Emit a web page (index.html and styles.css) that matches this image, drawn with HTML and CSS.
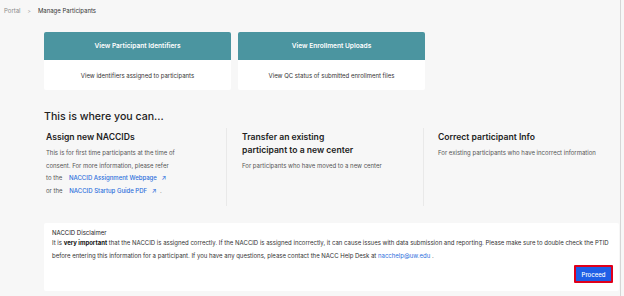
FILE: index.html
```html
<!DOCTYPE html>
<html>
<head>
<meta charset="utf-8">
<link rel="stylesheet" href="styles.css">
</head>
<body>
<div class="page">
  <nav class="crumbs"><span class="crumb-muted">Portal</span><span class="sep">&gt;</span><span class="crumb-current">Manage Participants</span></nav>
  <div class="main">
    <div class="cards">
      <div class="card">
        <div class="card-head">View Participant Identifiers</div>
        <div class="card-body">View identifiers assigned to participants</div>
      </div>
      <div class="card">
        <div class="card-head">View Enrollment Uploads</div>
        <div class="card-body">View QC status of submitted enrollment files</div>
      </div>
    </div>
    <h1 class="title">This is where you can...</h1>
    <div class="cols">
      <div class="col col-1">
        <h2>Assign new NACCIDs</h2>
        <p>This is for first time participants at the time of consent. For more information, please refer</p>
        <p class="linkline">to the <a href="#">NACCID Assignment Webpage <span class="arr">&#8599;</span></a></p>
        <p class="linkline">or the <a href="#">NACCID Startup Guide PDF <span class="arr">&#8599;</span></a> .</p>
      </div>
      <div class="col col-2">
        <h2>Transfer an existing<br>participant to a new center</h2>
        <p>For participants who have moved to a new center</p>
      </div>
      <div class="col col-3">
        <h2>Correct participant Info</h2>
        <p>For existing participants who have incorrect information</p>
      </div>
    </div>
    <div class="disclaimer">
      <div class="d-title">NACCID Disclaimer</div>
      <p>It is <b>very important</b> that the NACCID is assigned correctly. If the NACCID is assigned incorrectly, it can cause issues with data submission and reporting. Please make sure to double check the PTID before entering this information for a participant. If you have any questions, please contact the NACC Help Desk at <a href="#">nacchelp@uw.edu</a> .</p>
      <div class="actions"><button class="proceed">Proceed</button></div>
    </div>
  </div>
</div>
</body>
</html>
```
FILE: styles.css
```css
html, body {
  margin: 0;
  padding: 0;
  background: #f7f7f7;
  font-family: Inter, "Liberation Sans", sans-serif;
  color: #2b2b2b;
}
.page {
  width: 621px;
  height: 296px;
  border-right: 1px solid #d6d6d6;
  box-sizing: border-box;
  overflow: hidden;
}
.crumbs {
  display: flex;
  align-items: center;
  gap: 7px;
  padding: 6px 0 0 4px;
  height: 10px;
  font-size: 6px;
  line-height: 8px;
}
.crumb-muted { color: #8a8a8a; }
.sep { color: #9a9a9a; font-size: 5px; }
.crumb-current { color: #333; }
.main {
  padding: 16px 0 0 44px;
}
.cards {
  display: flex;
  gap: 7px;
}
.card {
  width: 187px;
  background: #fff;
  border-radius: 2px;
  overflow: hidden;
}
.card-head {
  background: #4b95a0;
  color: #fff;
  font-weight: 600;
  font-size: 6.6px;
  height: 28px;
  display: flex;
  align-items: center;
  justify-content: center;
}
.card-body {
  height: 30px;
  display: flex;
  align-items: center;
  justify-content: center;
  font-size: 6px;
  color: #333;
  padding-top: 1px;
  box-sizing: border-box;
}
.title {
  margin: 20px 0 0 0;
  font-size: 10.6px;
  font-weight: 500;
  line-height: 14px;
  color: #222;
}
.cols {
  display: flex;
  margin-top: 4px;
}
.col {
  width: 195px;
  box-sizing: border-box;
  height: 78px;
}
.col-1 { padding: 3px 0 0 2px; border-right: 1px solid #e9e9e9; width: 183px; }
.col-2 { padding: 3px 0 0 15px; border-right: 1px solid #e9e9e9; width: 197px; }
.col-3 { padding: 3px 0 0 14px; }
.col h2 {
  margin: 0;
  font-size: 8.6px;
  font-weight: 600;
  line-height: 13px;
  color: #222;
}
.col p {
  margin: 3px 0 0 0;
  font-size: 6px;
  line-height: 12.5px;
  color: #555;
  width: 140px;
}
.col-2 p, .col-3 p { width: 180px; }
.col p.linkline { margin-top: 0; }
.col a {
  color: #2d6fdc;
  text-decoration: none;
  font-weight: 500;
  margin-left: 5px;
  margin-right: 2px;
}
.arr { font-size: 6px; margin-left: 3px; }
.disclaimer {
  margin-top: 17px;
  width: 575px;
  height: 68px;
  background: #fff;
  border-radius: 2px;
  box-sizing: border-box;
  padding: 5px 6px 0 8px;
}
.d-title {
  font-size: 6px;
  line-height: 9px;
  color: #222;
}
.disclaimer p {
  margin: 0;
  font-size: 6px;
  line-height: 12.5px;
  color: #333;
}
.disclaimer b { font-weight: 700; color: #111; }
.disclaimer a { color: #2d6fdc; text-decoration: none; }
.actions {
  display: flex;
  justify-content: flex-end;
  margin-top: 3px;
}
.proceed {
  background: #1f5fe6;
  color: #fff;
  border: 2px solid #e0001b;
  font-family: Inter, "Liberation Sans", sans-serif;
  font-size: 6px;
  font-weight: 500;
  width: 39px;
  height: 18px;
  padding: 0;
  border-radius: 1px;
}
```
